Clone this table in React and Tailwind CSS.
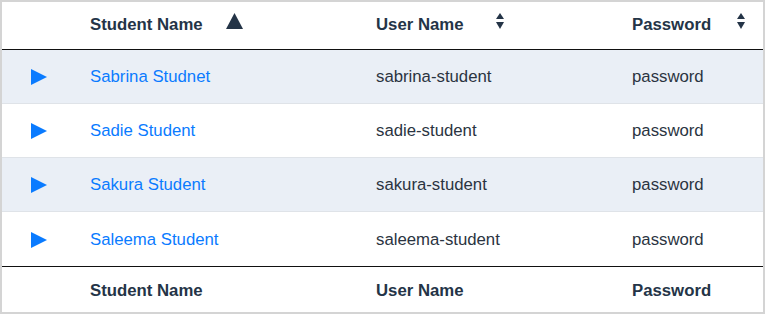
import React from 'react';

const students = [
  { name: 'Sabrina Studnet', user: 'sabrina-student', password: 'password' },
  { name: 'Sadie Student', user: 'sadie-student', password: 'password' },
  { name: 'Sakura Student', user: 'sakura-student', password: 'password' },
  { name: 'Saleema Student', user: 'saleema-student', password: 'password' },
];

const SortUp = () => (
  <svg width="17" height="16" viewBox="0 0 17 16" className="block">
    <polygon points="8.5,0 17,16 0,16" fill="#243447" />
  </svg>
);

const SortBoth = () => (
  <svg width="8" height="17" viewBox="0 0 8 17" className="block">
    <polygon points="4,0 8,6 0,6" fill="#243447" />
    <polygon points="0,9 8,9 4,16" fill="#243447" />
  </svg>
);

const Play = () => (
  <svg width="16" height="16" viewBox="0 0 16 16" className="block">
    <polygon points="0,0 16,8 0,16" fill="#0a7bff" />
  </svg>
);

const App = () => {
  return (
    <div
      className="w-[765px] h-[314px] border-2 border-[#d4d4d4] bg-white text-[16.75px]"
      style={{ fontFamily: '"Liberation Sans", Arial, sans-serif' }}
    >
      {/* header */}
      <div className="flex h-[48px] items-center pb-[2px] border-b border-[#111] font-bold text-[#243447]">
        <div className="w-[88px]" />
        <div className="w-[286px] flex items-center">
          <span>Student Name</span>
          <span className="ml-[23px] -translate-y-[4px]"><SortUp /></span>
        </div>
        <div className="w-[256px] flex items-center">
          <span>User Name</span>
          <span className="ml-[32px] -translate-y-[3px]"><SortBoth /></span>
        </div>
        <div className="flex-1 flex items-center">
          <span>Password</span>
          <span className="ml-[26px] -translate-y-[3px]"><SortBoth /></span>
        </div>
      </div>

      {/* rows */}
      {students.map((s, i) => (
        <div
          key={s.user}
          className={`flex h-[54px] items-center pt-[1px] ${i < students.length - 1 ? 'border-b border-[#dfe3e8]' : ''} ${i % 2 === 0 ? 'bg-[#eaeff6]' : 'bg-white'}`}
        >
          <div className="w-[88px] flex pl-[29px]">
            <Play />
          </div>
          <div className="w-[286px] text-[#0a7bff]">{s.name}</div>
          <div className="w-[256px] text-[#2a3441]">{s.user}</div>
          <div className="flex-1 text-[#2a3441]">{s.password}</div>
        </div>
      ))}

      {/* footer */}
      <div className="flex h-[45px] items-center pt-[4px] border-t border-[#111] font-bold text-[#243447]">
        <div className="w-[88px]" />
        <div className="w-[286px]">Student Name</div>
        <div className="w-[256px]">User Name</div>
        <div className="flex-1">Password</div>
      </div>
    </div>
  );
};

export default App;
